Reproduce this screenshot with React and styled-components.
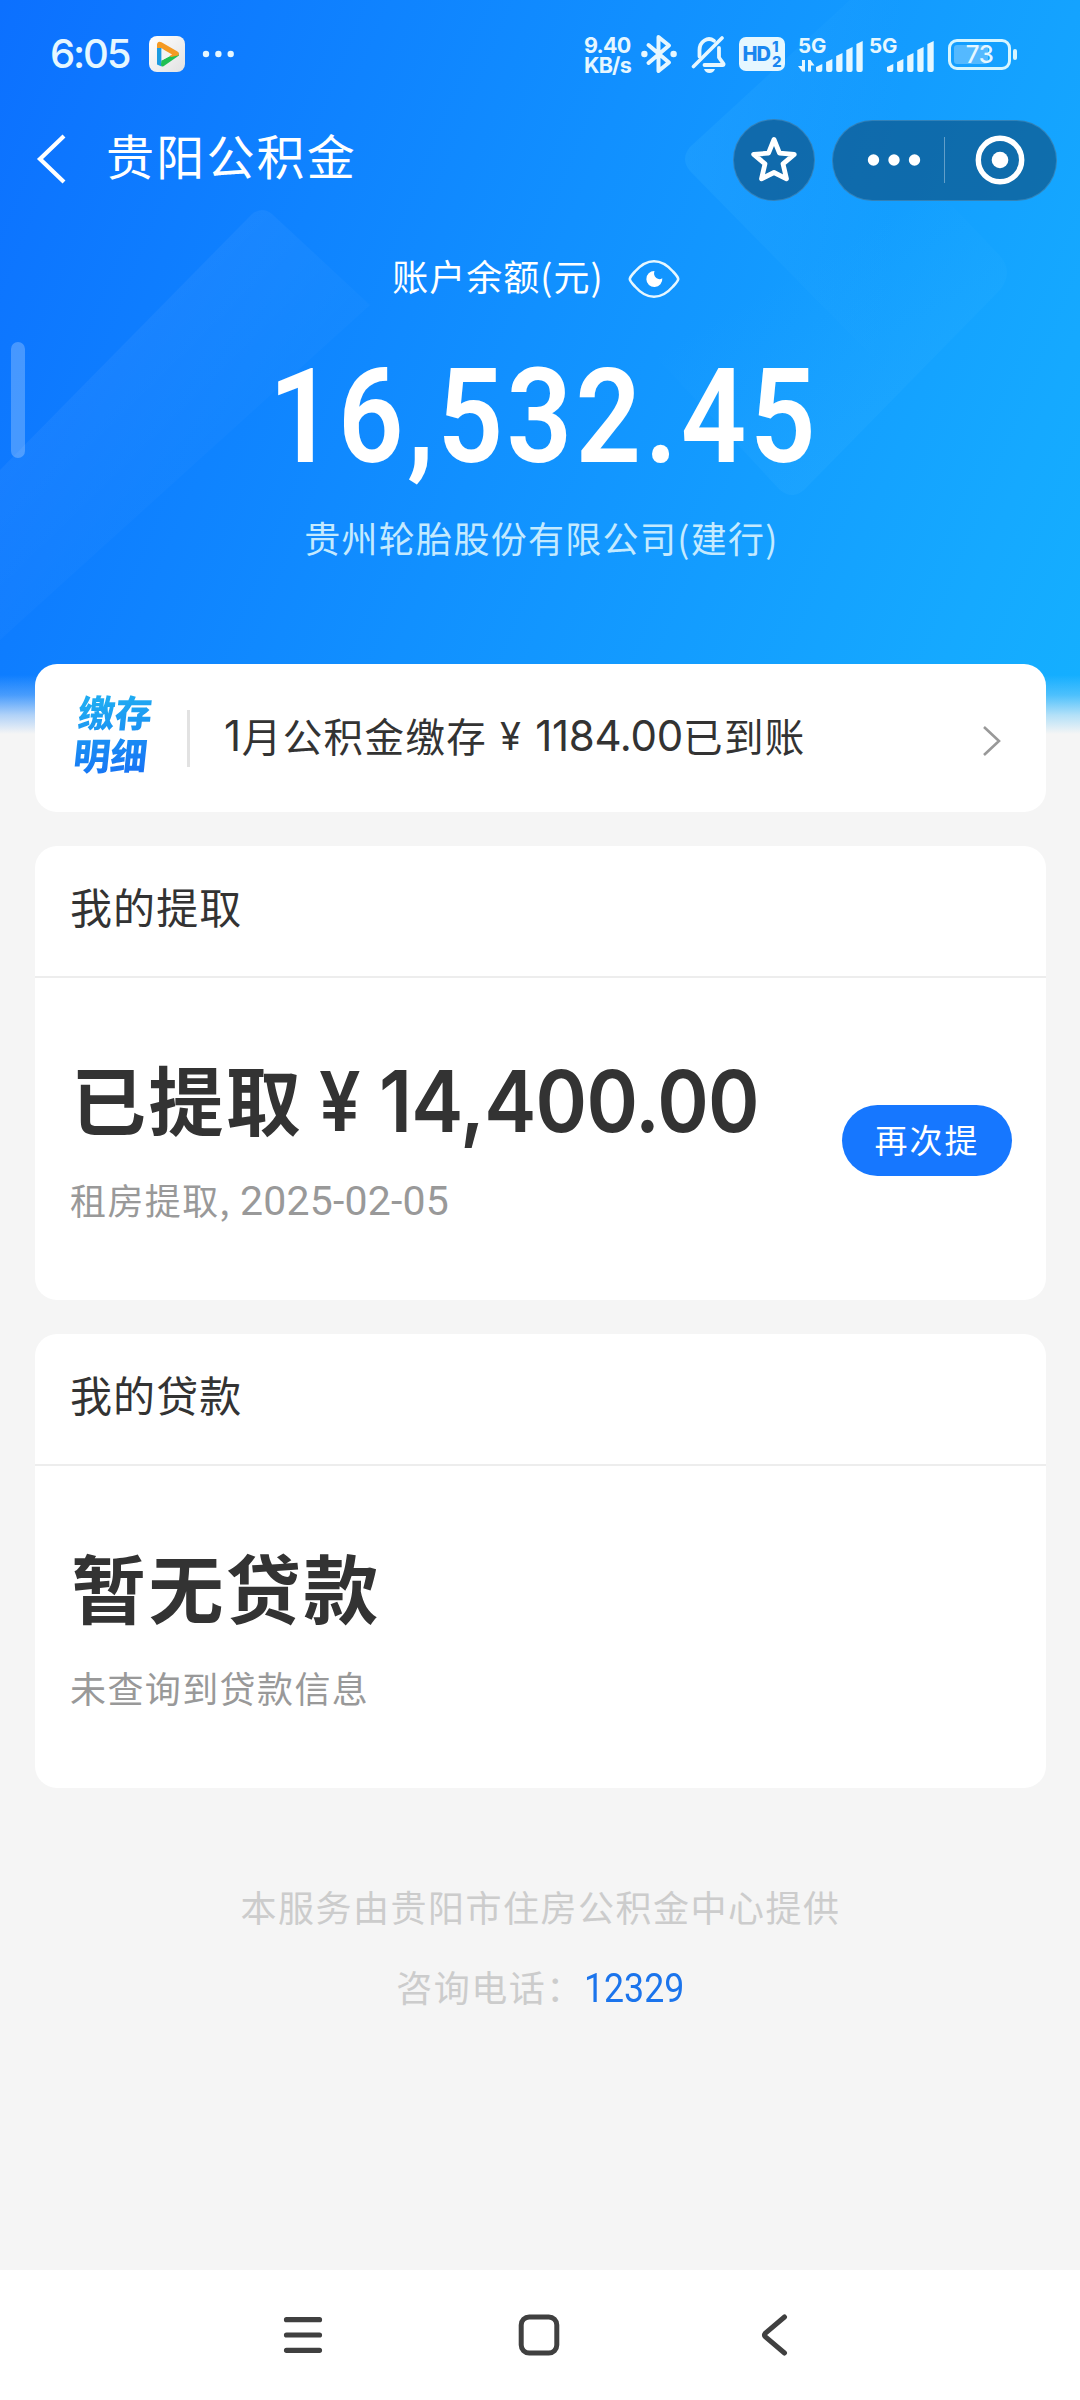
import React from "react";
import styled, { createGlobalStyle } from "styled-components";

const cjk = `"Noto Sans CJK SC", sans-serif`;

const services = [
  {
    id: "withdraw",
    title: "我的提取",
    label: "已提取",
    amount: "14,400.00",
    desc: "租房提取,",
    date: "2025-02-05",
    action: "再次提",
  },
  {
    id: "loan",
    title: "我的贷款",
    label: "暂无贷款",
    desc: "未查询到贷款信息",
  },
];

const signalBars = [8, 13, 19, 25, 31];

const Signal = ({ arrows }) => {
  return (
    <svg width="66" height="36" viewBox="0 0 66 36" fill="#e6f7ff">
      {arrows && (
        <path d="M7 24v11.500H4.200L0 30h4v-6zM10 35.500V24h2.500l4 5.500H13v6z" />
      )}
      {signalBars.map((h, index) => {
        const x = 18 + index * 10.1;
        return (
          <path
            key={h}
            d={`M${x} ${36 - h + 3}l6.300-3V34a2 2 0 0 1-2 2h-2.300a2 2 0 0 1-2-2z`}
          />
        );
      })}
    </svg>
  );
};

const StatusBar = () => {
  return (
    <Status>
      <Clock>6:05</Clock>
      <AppBadge>
        <svg width="36" height="36" viewBox="0 0 36 36">
          <path d="M8 8v20.500l4.600 2V12z" fill="#1c9be0" />
          <path d="M12.600 24.500 29 16l1 3.500-15.500 10.800q-2.500 1-2.500-2z" fill="#1fbf52" />
          <path d="M8 9.500q0-5 4.500-3.300l16 9.300q2.500 2 .5 4L22 21 12.600 12 8 12z" fill="#f59a23" />
          <path d="M12.600 12.500v12l10.500-6z" fill="#f3f3f3" />
        </svg>
      </AppBadge>
      <svg width="34" height="10" viewBox="0 0 34 10" fill="#e6f7ff">
        <circle cx="5" cy="5" r="3.200" />
        <circle cx="17.400" cy="5" r="3.200" />
        <circle cx="29.700" cy="5" r="3.200" />
      </svg>
      <StatusRight>
        <Speed>
          <span>9.40</span>
          <span>KB/s</span>
        </Speed>
        {/* bluetooth */}
        <svg width="36" height="40" viewBox="0 0 36 40" fill="none">
          <path
            d="M7.500 11 28 28.500 17.500 37V3L28 11.500 7.500 29"
            stroke="#e6f7ff"
            strokeWidth="4"
            strokeLinejoin="round"
            strokeLinecap="round"
          />
          <circle cx="3.400" cy="20" r="3.200" fill="#e6f7ff" />
          <circle cx="32.600" cy="20" r="3.200" fill="#e6f7ff" />
        </svg>
        {/* muted bell */}
        <BellSlot>
          <svg width="36" height="40" viewBox="0 0 36 40" fill="none">
            <path
              d="M8.500 22.500V16A9.500 11 0 0 1 23 6.800M28 14v9.500l4.500 6.300q.5 1.200-1 1.200H13.500"
              stroke="#e6f7ff"
              strokeWidth="3.800"
              strokeLinecap="round"
              strokeLinejoin="round"
            />
            <path d="M2.500 32.500 31 4" stroke="#e6f7ff" strokeWidth="3.600" strokeLinecap="round" />
            <path d="M13 35h11q-1.500 4-5.500 4T13 35z" fill="#e6f7ff" />
          </svg>
        </BellSlot>
        <HdBadge>
          <b>HD</b>
          <HdNums>
            <span>1</span>
            <span>2</span>
          </HdNums>
        </HdBadge>
        <SignalBox $gap="13px">
          <Signal arrows />
          <FiveG>5G</FiveG>
        </SignalBox>
        <SignalBox $gap="5px">
          <Signal />
          <FiveG>5G</FiveG>
        </SignalBox>
        <Battery>
          <BatteryLevel />
          <span>73</span>
        </Battery>
        <BatteryTip />
      </StatusRight>
    </Status>
  );
};

const Facets = () => {
  return (
    <FacetLayer>
      <svg width="1080" height="740" viewBox="0 0 1080 740">
        <defs>
          <linearGradient id="band" gradientUnits="userSpaceOnUse" x1="130" y1="340" x2="215" y2="430">
            <stop offset="0" stopColor="#fff" stopOpacity="0.045" />
            <stop offset="1" stopColor="#fff" stopOpacity="0.020" />
          </linearGradient>
          <linearGradient id="gem" gradientUnits="userSpaceOnUse" x1="685" y1="150" x2="900" y2="170">
            <stop offset="0" stopColor="#3ab4ff" stopOpacity="0.220" />
            <stop offset="1" stopColor="#3ab4ff" stopOpacity="0" />
          </linearGradient>
          <linearGradient id="tail" gradientUnits="userSpaceOnUse" x1="840" y1="470" x2="740" y2="300">
            <stop offset="0" stopColor="#5cc4ff" stopOpacity="0.100" />
            <stop offset="1" stopColor="#5cc4ff" stopOpacity="0" />
          </linearGradient>
        </defs>
        <path d="M252 214q10-8 20 0L370 305 0 640V470z" fill="url(#band)" />
        <path d="M850 0 690 147q-10 12 0 24L900 385V0z" fill="url(#gem)" />
        <path d="M640 340 780 490q12 10 24 0L1000 290q14-18 0-34L900 150z" fill="url(#tail)" />
      </svg>
    </FacetLayer>
  );
};

const ServiceCard = ({ title, label, amount, desc, date, action }) => {
  return (
    <Card>
      <CardTitle>{title}</CardTitle>
      <CardBody>
        <div>
          <Headline>
            {label}
            {amount && (
              <>
                <Yen>¥</Yen>
                <Amount>{amount}</Amount>
              </>
            )}
          </Headline>
          <Desc>
            {desc}
            {date && <DateText>{date}</DateText>}
          </Desc>
        </div>
        {action && <ActionButton type="button">{action}</ActionButton>}
      </CardBody>
    </Card>
  );
};

const App = () => {
  return (
    <Wrapper>
      <GlobalStyle />
      <Hero>
        <Facets />
        <StatusBar />
        <NavBar>
          <BackButton>
            <svg width="30" height="50" viewBox="0 0 30 50" fill="none">
              <path d="M28 2 4 25l24 23" stroke="#fff" strokeWidth="4.200" />
            </svg>
          </BackButton>
          <PageTitle>贵阳公积金</PageTitle>
          <StarButton>
            <svg width="50" height="50" viewBox="0 0 50 50" fill="none">
              <path
                d="M25 4.500 30.500 18.200 45.300 19.300 34 28.800 37.500 43.800 25 37.500 12.500 43.800 16 28.800 4.700 19.300 19.500 18.200z"
                stroke="#fff"
                strokeWidth="4.800"
                strokeLinejoin="round"
              />
            </svg>
          </StarButton>
          <Capsule>
            <svg width="54" height="14" viewBox="0 0 54 14" fill="#fff">
              <circle cx="6.500" cy="7" r="5.700" />
              <circle cx="27" cy="7" r="5.700" />
              <circle cx="47.500" cy="7" r="5.700" />
            </svg>
            <CapsuleLine />
            <svg width="50" height="50" viewBox="0 0 50 50">
              <circle cx="25" cy="25" r="21.700" fill="none" stroke="#fff" strokeWidth="5.400" />
              <circle cx="25" cy="25" r="8.300" fill="#fff" />
            </svg>
          </Capsule>
        </NavBar>

        {/* balance */}
        <BalanceLabel>
          <span>账户余额(元)</span>
          <svg width="52" height="40" viewBox="0 0 52 40" fill="none">
            <path
              d="M1.800 20Q1.800 18 7 12.500 16 2.200 26 2.200T45 12.500Q50.200 18 50.200 20T45 27.500Q36 37.800 26 37.800T7 27.500Q1.800 22 1.800 20z"
              stroke="#e6f7ff"
              strokeWidth="2.600"
            />
            <path d="M26.500 12a8 8 0 1 0 7.800 7.200q-3 2-6-.2-3.300-2.800-1.800-7z" fill="#fff" />
          </svg>
        </BalanceLabel>
        <Balance>16,532.45</Balance>
        <Company>贵州轮胎股份有限公司(建行)</Company>
        <SideHandle />
      </Hero>

      <Content>
        <NoticeCard>
          <NoticeLogo>
            <span>缴存</span>
            <span>明细</span>
          </NoticeLogo>
          <NoticeLine />
          <NoticeText>
            <i>1</i>月公积金缴存
            <NoticeYen>¥</NoticeYen>
            <i>1184.00</i>已到账
          </NoticeText>
          <NoticeArrow>
            <svg width="20" height="34" viewBox="0 0 20 34" fill="none">
              <path d="M2 3 17 17 2 31" stroke="#999" strokeWidth="2.600" />
            </svg>
          </NoticeArrow>
        </NoticeCard>
        {services.map((item) => {
          return <ServiceCard key={item.id} {...item} />;
        })}
      </Content>

      <Footer>
        <p>本服务由贵阳市住房公积金中心提供</p>
        <p>
          咨询电话：<Phone>12329</Phone>
        </p>
      </Footer>

      {/* system navigation */}
      <SystemNav>
        <svg width="44" height="44" viewBox="0 0 44 44">
          <path
            d="M5.500 6.700h33M5.500 22h33M5.500 37.300h33"
            stroke="#404040"
            strokeWidth="5.200"
            strokeLinecap="round"
          />
        </svg>
        <svg width="44" height="44" viewBox="0 0 44 44" fill="none">
          <rect x="4.200" y="4" width="35.600" height="36" rx="8" stroke="#404040" strokeWidth="5" />
        </svg>
        <svg width="44" height="44" viewBox="0 0 44 44" fill="none">
          <path
            d="M31.500 4 12.500 20q-2 2 0 4L31.500 40"
            stroke="#404040"
            strokeWidth="5"
            strokeLinecap="round"
          />
        </svg>
      </SystemNav>
    </Wrapper>
  );
};

const GlobalStyle = createGlobalStyle`
  * {
    box-sizing: border-box;
    margin: 0;
    padding: 0;
  }
  body {
    background: #f5f5f5;
    font-family: ${cjk};
    color: #333;
  }
  svg {
    display: block;
    flex-shrink: 0;
  }
`;

const Wrapper = styled.main`
  display: flex;
  flex-direction: column;
  width: 1080px;
  height: 2400px;
  overflow: hidden;
  background: #f5f5f5;
`;

const Hero = styled.header`
  position: relative;
  height: 740px;
  flex-shrink: 0;
  color: #fff;
  background: linear-gradient(
      180deg,
      rgba(245, 245, 245, 0) 675px,
      rgba(245, 245, 245, 0.25) 695px,
      rgba(245, 245, 245, 0.7) 715px,
      #f5f5f5 734px
    ),
    linear-gradient(112deg, #0c70ff 0%, #1190ff 48%, #15a9ff 88%, #14b0ff 100%);
`;

const FacetLayer = styled.div`
  position: absolute;
  inset: 0;
  height: 670px;
  overflow: hidden;
`;

const Status = styled.div`
  position: relative;
  display: flex;
  align-items: center;
  height: 108px;
  padding: 0 63px 0 50px;
`;

const Clock = styled.span`
  width: 99px;
  font: 500 40px/40px Inter, sans-serif;
  letter-spacing: -2.1px;
  color: #e6f7ff;
`;

const AppBadge = styled.span`
  width: 36px;
  height: 36px;
  margin-right: 16px;
  border-radius: 8px;
  background: linear-gradient(135deg, #fff, #e2e2e2);
`;

const StatusRight = styled.div`
  display: flex;
  align-items: center;
  margin-left: auto;
  height: 40px;
`;

const Speed = styled.span`
  display: flex;
  flex-direction: column;
  width: 57px;
  margin-top: 3px;
  font: 700 21.500px/19.500px Inter, sans-serif;
  letter-spacing: -0.8px;
  color: #e6f7ff;
`;

const BellSlot = styled.span`
  margin: 0 12px 0 14px;
`;

const HdBadge = styled.span`
  display: flex;
  align-items: center;
  justify-content: center;
  gap: 2px;
  width: 46px;
  height: 34px;
  border-radius: 7px;
  background: #e6f7ff;
  color: #1a86f0;
  b {
    font: 800 20px/34px Inter, sans-serif;
    letter-spacing: -1px;
  }
`;

const HdNums = styled.span`
  display: flex;
  flex-direction: column;
  font: 800 15px/15px Inter, sans-serif;
`;

const SignalBox = styled.span`
  position: relative;
  margin-left: ${(props) => props.$gap};
`;

const FiveG = styled.span`
  position: absolute;
  left: 0;
  top: 0;
  font: 700 20.500px/20px Inter, sans-serif;
  letter-spacing: 0;
  color: #e6f7ff;
`;

const Battery = styled.span`
  position: relative;
  display: flex;
  align-items: center;
  justify-content: center;
  width: 63px;
  height: 31px;
  margin-left: 13px;
  border: 3px solid #d6f5ff;
  border-radius: 9px;
  font: 500 24px/25px Inter, sans-serif;
  letter-spacing: -0.5px;
  color: #e6f7ff;
  span {
    position: relative;
  }
`;

const BatteryLevel = styled.i`
  position: absolute;
  left: 3px;
  top: 3px;
  width: 34px;
  height: 19px;
  border-radius: 3px;
  background: rgba(255, 255, 255, 0.28);
`;

const BatteryTip = styled.i`
  width: 4px;
  height: 11px;
  margin-left: 2px;
  border-radius: 2px;
  background: #d6f5ff;
`;

const NavBar = styled.nav`
  position: relative;
  display: flex;
  align-items: center;
  height: 104px;
  padding: 0 23px 0 36px;
`;

const BackButton = styled.span`
  width: 70px;
  margin-top: -2px;
`;

const PageTitle = styled.h1`
  flex: 1;
  font-size: 48px;
  font-weight: 400;
  line-height: 60px;
  letter-spacing: 2.2px;
  margin-top: -12px;
`;

const StarButton = styled.span`
  display: flex;
  align-items: center;
  justify-content: center;
  width: 82px;
  height: 82px;
  margin-right: 17px;
  border-radius: 50%;
  border: 1px solid rgba(255, 255, 255, 0.15);
  background: rgba(13, 80, 128, 0.65);
`;

const Capsule = styled.span`
  display: flex;
  align-items: center;
  width: 225px;
  height: 81px;
  padding-left: 34px;
  border-radius: 41px;
  border: 1px solid rgba(255, 255, 255, 0.15);
  background: rgba(13, 80, 128, 0.65);
`;

const CapsuleLine = styled.i`
  width: 1px;
  height: 46px;
  margin: 0 30px 0 23px;
  background: rgba(255, 255, 255, 0.35);
`;

const BalanceLabel = styled.div`
  position: relative;
  display: flex;
  align-items: center;
  justify-content: center;
  gap: 24px;
  height: 60px;
  margin-top: 37px;
  padding-right: 8px;
  font-size: 36px;
  line-height: 56px;
  letter-spacing: 1px;
  span {
    margin-top: -8px;
  }
`;

const Balance = styled.div`
  position: relative;
  height: 150px;
  margin-top: 33px;
  padding-left: 9px;
  font: 600 132px/150px Roboto, sans-serif;
  letter-spacing: 4px;
  text-align: center;
  transform: scaleX(0.87);
`;

const Company = styled.div`
  position: relative;
  margin-top: 17px;
  padding-left: 3px;
  font-size: 36px;
  line-height: 56px;
  letter-spacing: 1.3px;
  text-align: center;
  color: #c4eaff;
`;

const SideHandle = styled.i`
  position: absolute;
  left: 11px;
  top: 342px;
  width: 14px;
  height: 116px;
  border-radius: 7px;
  background: rgba(255, 255, 255, 0.24);
`;

const Content = styled.section`
  position: relative;
  display: flex;
  flex-direction: column;
  gap: 34px;
  margin: -76px 34px 0 35px;
`;

const NoticeCard = styled.article`
  display: flex;
  align-items: center;
  height: 148px;
  padding: 0 44px 0 41px;
  border-radius: 22px;
  background: #fff;
`;

const NoticeLogo = styled.div`
  display: flex;
  flex-direction: column;
  width: 111px;
  margin-top: -11px;
  font-size: 37px;
  font-weight: 900;
  line-height: 43px;
  transform: skewX(-6deg);
  background: linear-gradient(170deg, #1fabf2 15%, #1672f5 90%);
  background-clip: text;
  -webkit-background-clip: text;
  color: transparent;
`;

const NoticeLine = styled.i`
  width: 3px;
  height: 57px;
  background: #e2e2e2;
`;

const NoticeText = styled.p`
  display: flex;
  flex: 1;
  padding-left: 34px;
  margin-top: -4px;
  font-size: 39.500px;
  line-height: 60px;
  letter-spacing: 1.4px;
  i {
    font: 400 42px/62px Inter, sans-serif;
    letter-spacing: -0.3px;
  }
  i:first-child {
    margin-right: 1px;
  }
`;

const NoticeYen = styled.span`
  width: 48px;
  text-align: center;
  font: 400 38px/62px Inter, sans-serif;
`;

const NoticeArrow = styled.span`
  margin-top: 5px;
`;

const Card = styled.article`
  height: 454px;
  border-radius: 22px;
  background: #fff;
`;

const CardTitle = styled.h2`
  height: 132px;
  padding: 30px 0 0 35px;
  border-bottom: 2px solid #ededed;
  font-size: 42px;
  font-weight: 400;
  line-height: 60px;
  letter-spacing: 1.1px;
`;

const CardBody = styled.div`
  display: flex;
  justify-content: space-between;
  padding: 72px 34px 0 35px;
`;

const Headline = styled.div`
  display: flex;
  height: 100px;
  padding-left: 1px;
  font-size: 75px;
  font-weight: 700;
  line-height: 96px;
  letter-spacing: 2.400px;
`;

const Yen = styled.span`
  width: 76px;
  text-align: center;
  font: 600 82px/103px Inter, sans-serif;
  transform: scaleX(0.9);
`;

const Amount = styled.span`
  font: 600 85px/103px Inter, sans-serif;
  letter-spacing: -0.8px;
  transform: scaleX(0.92);
  transform-origin: left;
`;

const Desc = styled.p`
  display: flex;
  margin-top: 19px;
  font-size: 36px;
  line-height: 60px;
  letter-spacing: 1.4px;
  color: #999;
`;

const DateText = styled.span`
  padding-left: 9px;
  font: 400 41px/65px Roboto, sans-serif;
  letter-spacing: 0.2px;
`;

const ActionButton = styled.button`
  width: 170px;
  height: 71px;
  margin: 55px 0 0 -60px;
  border: none;
  border-radius: 36px;
  background: #1677ff;
  color: #fff;
  font-family: ${cjk};
  font-size: 33px;
  line-height: 66px;
  letter-spacing: 2px;
  padding-bottom: 4px;
`;

const Footer = styled.footer`
  padding: 78px 0 0 1px;
  text-align: center;
  font-size: 36px;
  line-height: 80px;
  letter-spacing: 1.5px;
  color: #ccc;
`;

const Phone = styled.span`
  display: inline-block;
  margin-right: -14px;
  font: 400 41px/60px Roboto, sans-serif;
  letter-spacing: 0;
  color: #1b74ec;
  transform: scaleX(0.87);
  transform-origin: left;
`;

const SystemNav = styled.nav`
  display: flex;
  align-items: center;
  justify-content: space-between;
  height: 130px;
  margin-top: auto;
  padding: 0 283px 0 281px;
  background: #fff;
`;

export default App;
